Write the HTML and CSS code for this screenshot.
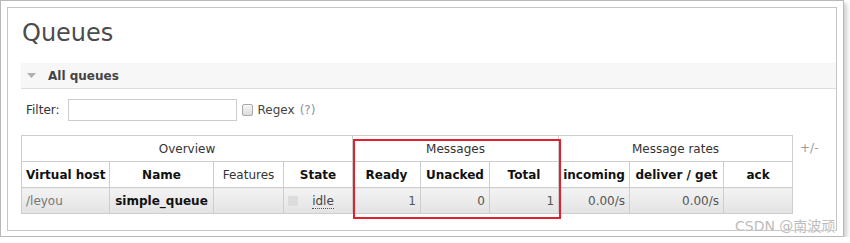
FILE: index.html
```html
<!DOCTYPE html>
<html>
	<head>
		<meta charset="utf-8" />
		<link rel="stylesheet" href="styles.css">
		<title>Queues</title>
	</head>
	<body>
		<div class="frame">
			<div class="panel">
				<h1>Queues</h1>
				<div class="section-hd">
					<svg class="arrow" width="9" height="6" viewBox="0 0 9 6"><polygon points="0,0 9,0 4.5,5" fill="#b0b0b0"/></svg>
					All queues
				</div>
				<div class="filter">
					<span class="filter-label">Filter:</span>
					<input type="text" class="filter-input" />
					<span class="check"></span>
					<span class="regex">Regex</span>
					<span class="help">(?)</span>
				</div>
				<div class="list">
					<table>
						<colgroup>
							<col style="width:88px">
							<col style="width:104px">
							<col style="width:70px">
							<col style="width:69px">
							<col style="width:68px">
							<col style="width:69px">
							<col style="width:69px">
							<col style="width:71px">
							<col style="width:94px">
							<col style="width:69px">
						</colgroup>
						<thead>
							<tr class="group">
								<th colspan="4">Overview</th>
								<th colspan="3">Messages</th>
								<th colspan="3">Message rates</th>
							</tr>
							<tr class="cols">
								<th>Virtual host</th>
								<th>Name</th>
								<th class="plain">Features</th>
								<th>State</th>
								<th>Ready</th>
								<th>Unacked</th>
								<th>Total</th>
								<th>incoming</th>
								<th>deliver / get</th>
								<th>ack</th>
							</tr>
						</thead>
						<tbody>
							<tr>
								<td class="vhost">/leyou</td>
								<td class="name">simple_queue</td>
								<td></td>
								<td class="state"><span class="status"></span><abbr>idle</abbr></td>
								<td class="num">1</td>
								<td class="num">0</td>
								<td class="num">1</td>
								<td class="num">0.00/s</td>
								<td class="num">0.00/s</td>
								<td></td>
							</tr>
						</tbody>
					</table>
					<span class="plus-minus">+/-</span>
				</div>
			</div>
			<div class="mark"></div>
			<div class="watermark">CSDN @南波顽</div>
		</div>
	</body>
</html>
```

FILE: styles.css
```css
body,html{
	margin:0;
	padding:0;
	background-color:#fff;
	font-family:"DejaVu Sans", Verdana, sans-serif;
	font-size:12px;
	color:#444;
}
.frame{
	position:relative;
	box-sizing:border-box;
	width:844px;
	height:237px;
	padding:6px;
	border:1px solid #b9b9b9;
	background-color:#fff;
	box-shadow:3px 3px 4px rgba(0,0,0,0.18);
}
.panel{
	box-sizing:border-box;
	height:224px;
	border:1px solid #c6c6c6;
	padding:10px 0 0 13px;
}
h1{
	margin:0 0 15px 1px;
	font-size:24px;
	font-weight:normal;
	line-height:30px;
	color:#4c4c4c;
}
.section-hd{
	display:flex;
	align-items:center;
	height:25px;
	padding-left:6px;
	background-color:#f7f7f7;
	border-bottom:1px solid #dcdcdc;
	font-weight:bold;
	color:#444;
}
.section-hd .arrow{
	margin-right:12px;
}
.filter{
	display:flex;
	align-items:center;
	height:22px;
	margin-top:10px;
	padding-left:5px;
}
.filter-label{
	margin-right:8px;
	color:#333;
}
.filter-input{
	box-sizing:border-box;
	width:169px;
	height:22px;
	margin:0 5px 0 0;
	border:1px solid #ccc;
	padding:0;
}
.check{
	box-sizing:border-box;
	width:11px;
	height:12px;
	margin-right:5px;
	border:1px solid #a8a8a8;
	border-radius:2px;
	background:linear-gradient(#f6f6f6,#dcdcdc);
}
.regex{
	color:#444;
}
.help{
	margin-left:5px;
	color:#8a92a8;
}
.list{
	display:flex;
	align-items:flex-start;
	margin-top:14px;
}
table{
	width:771px;
	flex:none;
	border-collapse:collapse;
	table-layout:fixed;
}
th,td{
	height:25px;
	padding:0 4px;
	border:1px solid #cdcdcd;
	line-height:24px;
	white-space:nowrap;
	overflow:hidden;
}
th{
	text-align:center;
	color:#111;
}
.group th{
	font-weight:normal;
	color:#333;
}
.cols .plain{
	font-weight:normal;
	color:#333;
}
td{
	background:linear-gradient(#f3f3f3,#e3e3e3);
	color:#555;
}
.vhost{
	color:#777;
}
.name{
	text-align:center;
	font-weight:bold;
	color:#111;
}
.state{
	text-align:center;
}
.state .status{
	float:left;
	width:10px;
	height:10px;
	margin-top:7px;
	background-color:#dcdcdc;
}
.state abbr{
	color:#444;
	text-decoration:none;
	border-bottom:1px dotted #555;
}
.num{
	text-align:right;
}
.plus-minus{
	margin-left:7px;
	line-height:26px;
	color:#999;
}
.mark{
	position:absolute;
	left:352px;
	top:138px;
	box-sizing:border-box;
	width:208px;
	height:80px;
	border:2px solid #e3202b;
}
.watermark{
	position:absolute;
	left:734px;
	top:217px;
	font-family:"DejaVu Sans", "Noto Sans CJK SC", sans-serif;
	font-size:14px;
	line-height:16px;
	color:#bcbcbc;
	text-shadow:0 0 2px #fff;
}
```
